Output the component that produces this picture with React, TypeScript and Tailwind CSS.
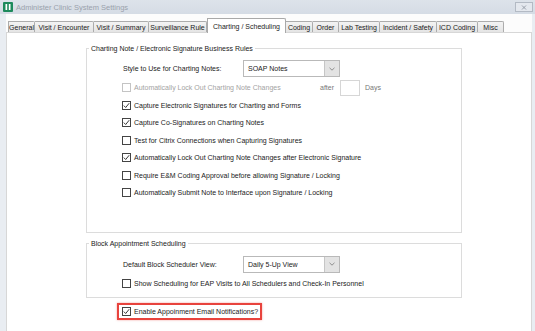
import { ReactNode } from "react";

const Check = ({ checked, disabled }: { checked?: boolean; disabled?: boolean }) => (
  <span
    className={`w-[9px] h-[9px] shrink-0 border flex items-center justify-center bg-white ${
      disabled ? "border-[#c4c4c4]" : "border-[#444]"
    }`}
  >
    {checked && (
      <svg width="7" height="7" viewBox="0 0 7 7">
        <path d="M0.8 3.6 L2.7 5.5 L6.2 1.2" fill="none" stroke="#222" strokeWidth="0.9" />
      </svg>
    )}
  </span>
);

const CheckRow = ({
  label,
  checked,
  disabled,
  children,
}: {
  label: string;
  checked?: boolean;
  disabled?: boolean;
  children?: ReactNode;
}) => (
  <div className="h-[17.5px] flex items-center pl-[35px]">
    <Check checked={checked} disabled={disabled} />
    <span className={`ml-[3px] whitespace-nowrap ${disabled ? "text-[#a3a3a3]" : ""}`}>{label}</span>
    {children}
  </div>
);

const Select = ({ value }: { value: string }) => (
  <div className="w-[97px] h-[17px] border border-[#b9b9b9] bg-white flex">
    <span className="flex-1 flex items-center pl-[4px]">{value}</span>
    <span className="w-[15px] bg-[#e3e3e3] border-l border-[#c6c6c6] flex items-center justify-center">
      <svg width="6" height="4" viewBox="0 0 6 4">
        <path d="M0.5 0.8 L3 3.2 L5.5 0.8" fill="none" stroke="#777" strokeWidth="0.8" />
      </svg>
    </span>
  </div>
);

const tabs: [string, number][] = [
  ["General", 27],
  ["Visit / Encounter", 59],
  ["Visit / Summary", 55],
  ["Surveillance Rule", 58],
  ["Charting / Scheduling", 79],
  ["Coding", 27],
  ["Order", 26],
  ["Lab Testing", 41],
  ["Incident / Safety", 57],
  ["ICD Coding", 41],
  ["Misc", 26],
];

export default function App() {
  return (
    <div className="w-[535px] h-[331px] overflow-hidden flex flex-col bg-[#e9edf2] text-[7px] leading-[9px] text-[#1a1a1a] font-['Liberation_Sans',Arial,sans-serif]">
      {/* title bar */}
      <div className="h-[14px] shrink-0 flex items-center pl-[3px] bg-gradient-to-b from-[#dde3ea] to-[#d5dce5]">
        <svg width="10" height="10" viewBox="0 0 10 10">
          <rect width="10" height="10" rx="1" fill="#1e8a5c" />
          <rect x="2.5" y="2" width="5" height="6" fill="#fff" />
          <rect x="4.2" y="2" width="1.6" height="6" fill="#1e8a5c" />
        </svg>
        <span className="ml-[3px] text-[#9aa2ac] text-[7.5px]">Administer Clinic System Settings</span>
        <div className="ml-auto mr-[2px] w-[18px] h-[10px] border border-[#b3bac4] bg-[#e4e8ee] flex items-center justify-center">
          <svg width="6" height="5" viewBox="0 0 6 5">
            <path d="M1 0.5 L5 4.5 M5 0.5 L1 4.5" stroke="#8e96a0" strokeWidth="0.9" />
          </svg>
        </div>
      </div>

      <div className="flex-1 flex flex-col ml-[6px] mr-[3px] bg-[#fcfcfc]">
        {/* tabs */}
        <div className="h-[18px] shrink-0 flex items-end pl-[2px]">
          {tabs.map(([t, w]) =>
            t === "Charting / Scheduling" ? (
              <div
                key={t}
                style={{ width: w }}
                className="h-[15px] -mb-px relative z-10 bg-white border border-b-0 border-[#a9a9a9] rounded-tr-[2px] flex items-center justify-center whitespace-nowrap"
              >
                {t}
              </div>
            ) : (
              <div
                key={t}
                style={{ width: w }}
                className="h-[11px] bg-gradient-to-b from-[#f3f3f3] to-[#e4e4e4] border border-b-0 border-l-0 first:border-l border-[#acacac] rounded-tr-[2px] flex items-center justify-center whitespace-nowrap"
              >
                {t}
              </div>
            )
          )}
        </div>

        {/* panel */}
        <div className="flex-1 bg-white border border-b-0 border-[#d7d7d7] pl-[79px] pt-[11px]">
          <fieldset className="w-[376px] border border-[#dcdcdc] pb-[30px]">
            <legend className="ml-[2px] px-[2px] leading-[9px]">
              Charting Note / Electronic Signature Business Rules
            </legend>
            <div className="h-[17px] mt-[7px] flex items-center pl-[36px]">
              <span className="w-[120px]">Style to Use for Charting Notes:</span>
              <Select value="SOAP Notes" />
            </div>
            <div className="mt-[2px]">
              <div className="h-[17.5px] flex items-center pl-[35px]">
                <Check disabled />
                <span className="ml-[3px] w-[186px] whitespace-nowrap text-[#a3a3a3]">
                  Automatically Lock Out Charting Note Changes
                </span>
                <span className="text-[#777]">after</span>
                <span className="ml-[6px] w-[20px] h-[16px] border border-[#d6d6d6] bg-white" />
                <span className="ml-[5px] text-[#777]">Days</span>
              </div>
              <CheckRow checked label="Capture Electronic Signatures for Charting and Forms" />
              <CheckRow checked label="Capture Co-Signatures on Charting Notes" />
              <CheckRow label="Test for Citrix Connections when Capturing Signatures" />
              <CheckRow checked label="Automatically Lock Out Charting Note Changes after Electronic Signature" />
              <CheckRow label="Require E&M Coding Approval before allowing Signature / Locking" />
              <CheckRow label="Automatically Submit Note to Interface upon Signature / Locking" />
            </div>
          </fieldset>

          <fieldset className="w-[376px] mt-[6.5px] border border-[#dcdcdc] pb-[5px]">
            <legend className="ml-[2px] px-[2px] leading-[9px]">Block Appointment Scheduling</legend>
            <div className="h-[17px] mt-[7.5px] flex items-center pl-[36px]">
              <span className="w-[120px]">Default Block Scheduler View:</span>
              <Select value="Daily 5-Up View" />
            </div>
            <div className="mt-[2.25px]">
              <CheckRow label="Show Scheduling for EAP Visits to All Schedulers and Check-In Personnel" />
            </div>
          </fieldset>

          <div className="mt-[5px] ml-[31px] w-[145px] h-[17px] border-2 border-[#e8433d] shadow-[0_0_2px_rgba(232,67,61,0.5)] flex items-center pl-[3px]">
            <Check checked />
            <span className="ml-[3px] whitespace-nowrap">Enable Appoinment Email Notifications?</span>
          </div>
        </div>
      </div>
    </div>
  );
}
